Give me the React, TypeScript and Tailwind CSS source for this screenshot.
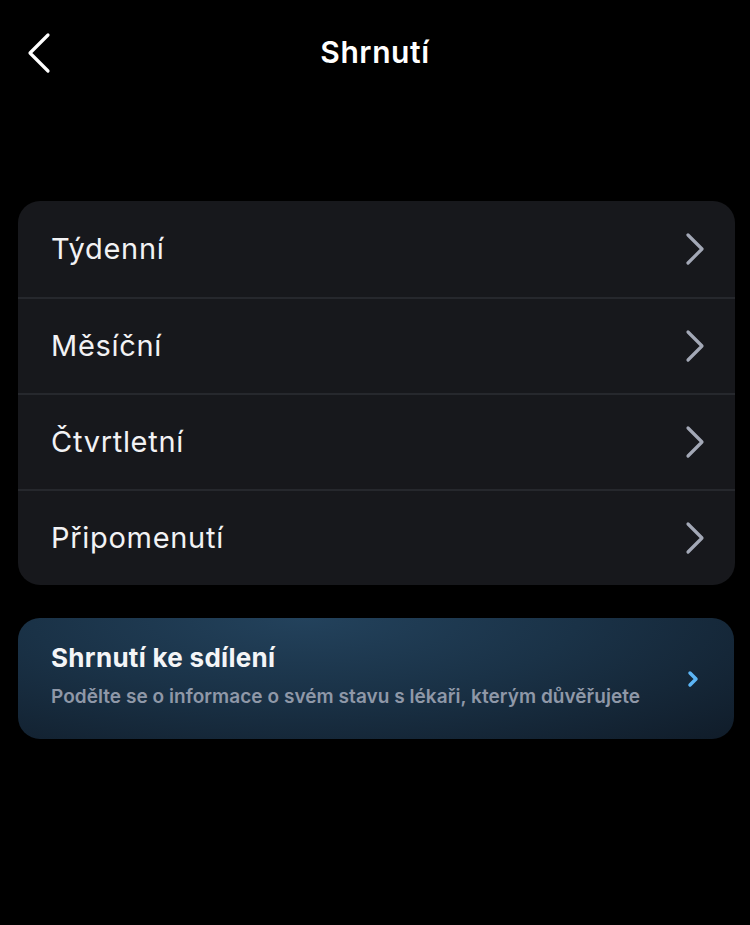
import { ChevronRight } from 'lucide-react';

const rows = ['Týdenní', 'Měsíční', 'Čtvrtletní', 'Připomenutí'];

function BackIcon() {
    return (
        <svg width="26" height="42" viewBox="0 0 26 42" fill="none">
            <path d="M22 3L4 21L22 39" stroke="white" strokeWidth="3.2" strokeLinecap="round" strokeLinejoin="round" />
        </svg>
    );
}

function RowChevron() {
    return (
        <svg width="24" height="34" viewBox="0 0 24 34" fill="none">
            <path d="M5 3L19 17L5 31" stroke="#a3a8b6" strokeWidth="3.2" strokeLinecap="round" strokeLinejoin="round" />
        </svg>
    );
}

export default function App() {
    return (
        <div
            className="w-[750px] h-[925px] bg-black text-white flex flex-col"
            style={{ fontFamily: 'Inter, "Noto Sans", sans-serif' }}>
            <div className="relative h-[106px] flex items-center justify-center">
                <button className="absolute left-[26px] top-[32px]">
                    <BackIcon />
                </button>
                <h1 className="text-[30px] font-semibold tracking-[0.6px] -mt-[2px]">Shrnutí</h1>
            </div>
            <div className="px-[18px] mt-[95px]">
                <div className="bg-[#17181c] rounded-[22px] overflow-hidden w-[717px]">
                    {rows.map((r, i) => (
                        <div
                            key={r}
                            className={`flex items-center justify-between h-[96px] pl-[33px] pr-[28px] ${
                                i > 0 ? 'border-t-2 border-[#26282d]' : ''
                            }`}>
                            <span className="text-[29px] text-[#f2f2f4] tracking-[0.7px]">{r}</span>
                            <RowChevron />
                        </div>
                    ))}
                </div>
                <div className="mt-[33px] w-[716px] h-[121px] rounded-[22px] bg-[radial-gradient(ellipse_at_40%_0%,#23425c_0%,#1a3247_45%,#101c29_100%)] flex items-center justify-between pl-[33px] pr-[28px]">
                    <div className="flex flex-col -mt-[5px]">
                        <span className="text-[26px] font-bold text-[#f4f5f7] leading-[30px] tracking-[0.3px]">
                            Shrnutí ke sdílení
                        </span>
                        <span className="text-[19px] font-semibold text-[#8f98a8] mt-[12px] leading-[24px] tracking-[0.05px]">
                            Podělte se o informace o svém stavu s lékaři, kterým důvěřujete
                        </span>
                    </div>
                    <ChevronRight className="w-[24px] h-[24px] text-[#5cb5f5] mr-[1px]" strokeWidth={3.5} />
                </div>
            </div>
        </div>
    );
}
